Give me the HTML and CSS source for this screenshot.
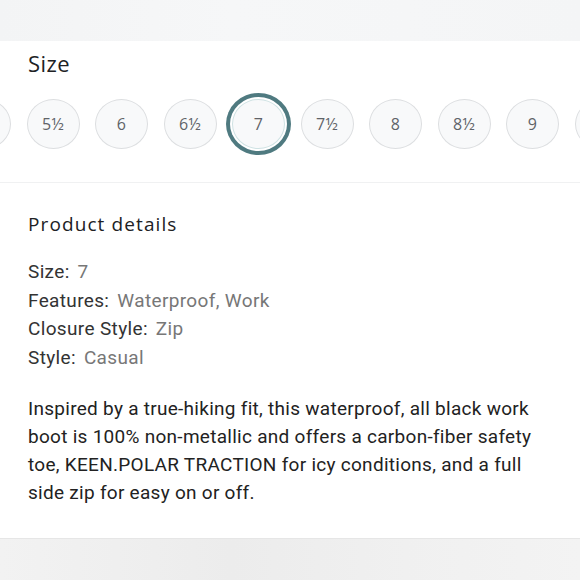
FILE: index.html
```html
<!DOCTYPE html>
<html lang="en">
<head>
    <meta name="viewport" content="width=device-width, initial-scale=1.0">
    <title>Product details</title>
    <link rel="stylesheet" href="styles.css">
</head>
<body>
    <div class="band top"></div>
    <div class="size-section">
        <h2 class="size-title">Size</h2>
        <div class="sizes">
            <span class="size"></span>
            <span class="size">5½</span>
            <span class="size">6</span>
            <span class="size">6½</span>
            <span class="size selected">7</span>
            <span class="size">7½</span>
            <span class="size">8</span>
            <span class="size">8½</span>
            <span class="size">9</span>
            <span class="size"></span>
        </div>
    </div>
    <div class="details">
        <h3 class="details-title">Product details</h3>
        <ul class="specs">
            <li><span class="label">Size:</span><span class="value">7</span></li>
            <li><span class="label">Features:</span><span class="value">Waterproof, Work</span></li>
            <li><span class="label">Closure Style:</span><span class="value">Zip</span></li>
            <li><span class="label">Style:</span><span class="value">Casual</span></li>
        </ul>
        <p class="description">Inspired by a true-hiking fit, this waterproof, all black work boot is 100% non-metallic and offers a carbon-fiber safety toe, KEEN.POLAR TRACTION for icy conditions, and a full side zip for easy on or off.</p>
    </div>
    <div class="band bottom"></div>
</body>
</html>
```
FILE: styles.css
```css
body {
    margin: 0;
    background: white;
    font-family: Roboto, 'Liberation Sans', sans-serif;
    color: #222;
    overflow: hidden;
}
.band {
    height: 41px;
    background: linear-gradient(90deg, #f3f4f5, #f6f7f8 40%, #f4f5f6);
}
.band.bottom {
    height: 42px;
    background: linear-gradient(90deg, #f2f2f2, #ececec 40%, #f0f0f0 70%, #f3f3f3);
    border-top: 1px solid #e6e6e6;
}
.size-section {
    padding: 8px 0 0 0;
    height: 133px;
    border-bottom: 1px solid #f0f1f2;
}
.size-title {
    margin: 0 0 16px 28px;
    font-family: 'Open Sans', sans-serif;
    font-weight: 400;
    font-size: 22px;
    letter-spacing: 0.4px;
    line-height: 28px;
    color: #202124;
}
.sizes {
    display: flex;
    align-items: center;
    gap: 15.5px;
    margin-left: -42px;
    height: 62px;
}
.size {
    flex: none;
    width: 51px;
    height: 48px;
    border: 1px solid #dcdee0;
    border-radius: 50%;
    background: #f8f9fa;
    display: flex;
    align-items: center;
    justify-content: center;
    font-family: 'Open Sans', sans-serif;
    font-size: 16px;
    letter-spacing: 0.3px;
    color: #5f6368;
}
.size.selected {
    border-color: #cfe2e3;
    box-shadow: 0 0 0 2px white, 0 0 0 6px #4f7a80;
}
.details {
    padding: 27px 28px 31px 28px;
}
.details-title {
    margin: 0 0 20px 0;
    font-family: 'Open Sans', sans-serif;
    font-weight: 400;
    font-size: 19px;
    letter-spacing: 1.1px;
    line-height: 28px;
    color: #202124;
}
.specs {
    list-style: none;
    margin: 0;
    padding: 0;
    font-size: 19px;
    letter-spacing: 0.35px;
    line-height: 28.5px;
}
.label {
    color: #333;
}
.value {
    color: #777;
    margin-left: 8px;
}
.description {
    margin: 23px 0 0 0;
    font-size: 19px;
    letter-spacing: 0.28px;
    line-height: 28px;
    color: #222;
}
```
